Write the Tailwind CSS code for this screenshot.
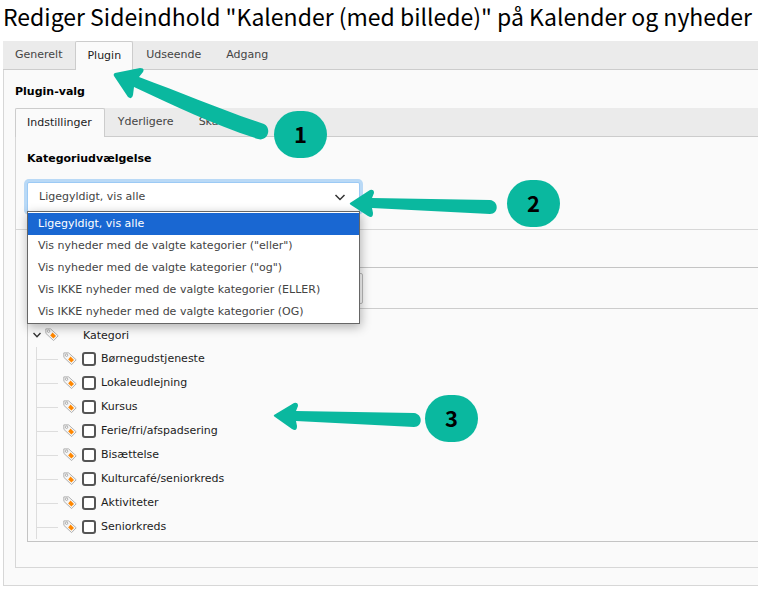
<!DOCTYPE html>
<html lang="da">
<head>
    <meta charset="UTF-8">
    <meta name="viewport" content="width=device-width, initial-scale=1.0">
    <title>Rediger Sideindhold</title>
    <script src="https://cdn.jsdelivr.net/npm/@tailwindcss/browser@4"></script>
</head>
<body class="relative bg-white font-['DejaVu_Sans',Verdana,sans-serif] text-[11px] leading-4 text-[#1c1c1c] overflow-x-hidden">
    <h1 class="h-[41px] pl-[3px] text-[23px] leading-8 text-black whitespace-nowrap font-['Noto_Sans_CJK_JP',sans-serif]">Rediger Sideindhold "Kalender (med billede)" på Kalender og nyheder</h1>

    <main class="ml-[3px]">
        <!-- Main tabs -->
        <div role="tablist" class="flex h-[29px] bg-[#ebebeb] border-b border-[#ccc] text-[#444]">
            <button role="tab" class="pl-3 pr-[13px] pb-px">Generelt</button>
            <button role="tab" aria-selected="true" class="-mb-px px-[11px] pb-px rounded-t-xs border border-b-0 border-[#ccc] bg-[#fafafa] text-[#222]">Plugin</button>
            <button role="tab" class="px-[13px] pb-px">Udseende</button>
            <button role="tab" class="px-3 pb-px">Adgang</button>
        </div>

        <div class="border-l border-b border-[#d7d7d7] bg-[#fafafa] pl-[11px] pt-3 pb-[17px]">
            <h2 class="h-[26px] pt-0.5 font-bold text-black">Plugin-valg</h2>

            <div role="tablist" class="flex h-[29px] bg-[#ebebeb] border-b border-[#ccc] text-[#444]">
                <button role="tab" aria-selected="true" class="-mb-px pl-[11px] pr-3 pb-px rounded-t-xs border border-b-0 border-[#ccc] bg-[#fafafa] text-[#222]">Indstillinger</button>
                <button role="tab" class="px-[13px] pb-px">Yderligere</button>
                <button role="tab" class="px-3 pb-px">Skabe</button>
            </div>

            <div class="border-l border-b border-[#d7d7d7] pb-[25px]">
                <section class="h-[93px] pl-[11px] pt-3.5 border-b border-[#d7d7d7]">
                    <label for="mode" class="block font-bold text-black">Kategoriudvælgelse</label>
                    <div class="relative mt-[15px] w-[333px]">
                        <select id="mode" class="block w-full h-[30px] pl-[11px] appearance-none bg-white border border-[#9ccaf5] ring-3 ring-[#b9d9f6] rounded-xs text-[#444] outline-none">
                            <option>Ligegyldigt, vis alle</option>
                        </select>
                        <svg class="absolute right-3.5 top-2.5 w-3 h-3" viewBox="0 0 12 12" fill="none" stroke="#333" stroke-width="1.5"><path d="M1.5 3 L6 7.5 L10.5 3"/></svg>
                        <ul role="listbox" class="absolute z-10 left-0 top-[29px] w-full pt-px bg-white border border-[#666] shadow-[1px_3px_10px_rgba(0,0,0,0.3)] text-[#444]">
                            <li role="option" aria-selected="true" class="h-[22px] pl-2.5 leading-[22px] bg-[#1967d2] text-white">Ligegyldigt, vis alle</li>
                            <li role="option" class="h-[22px] pl-2.5 leading-[22px]">Vis nyheder med de valgte kategorier ("eller")</li>
                            <li role="option" class="h-[22px] pl-2.5 leading-[22px]">Vis nyheder med de valgte kategorier ("og")</li>
                            <li role="option" class="h-[22px] pl-2.5 leading-[22px]">Vis IKKE nyheder med de valgte kategorier (ELLER)</li>
                            <li role="option" class="h-[22px] pl-2.5 leading-[22px]">Vis IKKE nyheder med de valgte kategorier (OG)</li>
                        </ul>
                    </div>
                </section>

                <section class="pl-[11px] pt-[37px]">
                    <div class="border border-r-0 border-[#c4c4c4]">
                        <div class="h-[41px] pt-[5px] border-b border-[#ccc]">
                            <input type="search" aria-label="Søg" class="block w-[335px] h-[31px] bg-[#fafafa] border border-[#bbb] rounded-xs">
                        </div>
                        <ul id="tree" class="pt-3.5 pb-0.5">
                            <li class="flex items-center h-6 pl-[5px]">
                                <svg class="w-2 h-2" viewBox="0 0 8 8" fill="none" stroke="#333" stroke-width="1.4"><path d="M.5 2 L4 5.8 L7.5 2"/></svg>
                                <svg class="w-3.5 h-3.5 ml-1" viewBox="0 0 14 14"><use href="#tag"/></svg>
                                <span class="ml-6 pt-px">Kategori</span>
                            </li>
                        </ul>
                    </div>
                </section>
            </div>
        </div>
    </main>

    <svg class="hidden">
        <symbol id="tag" viewBox="0 0 14 14">
            <path d="M.8 .9 L5.6 .9 L13.2 7.8 L8.6 12.6 L.9 5.4 Z" fill="#f6f6f6" stroke="#b0b0b0" stroke-width="1"/>
            <circle cx="3.6" cy="3.2" r="1.2" fill="#fff" stroke="#999" stroke-width=".8"/>
            <path d="M7.6 4.6 L11 7.9 L8.4 10.6 L5.2 7.4 Z" fill="#ff8700"/>
        </symbol>
    </svg>

    <!-- Callouts -->
    <svg class="absolute z-20 left-[112px] top-[66px] w-[158px] h-[76px]" viewBox="0 0 158 76" fill="#0ab89f"><path d="M3 7 Q1 8 2 10 L16 31 Q20 34 21 29 L22 21 C65 41 100 58 146 73 C156 76 160 62 152 58 C110 44 70 27 27 11 L31 6 Q33 2 28 2 Z"/></svg>
    <svg class="absolute z-20 left-[349px] top-[188px] w-[150px] h-[32px]" viewBox="0 0 150 32" fill="#0ab89f"><path d="M1 15 L21 2 Q25 1 25 5 L23 10 L141 12 C150 13 150 26 141 26 L23 20 L24 25 Q24 31 19 28 L2 17 Q0 16 1 15 Z"/></svg>
    <svg class="absolute z-20 left-[273px] top-[401px] w-[150px] h-[32px]" viewBox="0 0 150 32" fill="#0ab89f"><path d="M1 14 L21 2 Q25 1 25 5 L23 10 L141 12 C150 13 150 26 141 26 L23 20 L24 25 Q24 31 19 28 L2 16 Q0 15 1 14 Z"/></svg>
    <div class="absolute z-20 left-[274px] top-[111px] w-[53px] h-[47px] pb-1 rounded-3xl bg-[#0ab89f] flex items-center justify-center text-[22px] font-bold text-black font-['Noto_Sans_CJK_JP',sans-serif]">1</div>
    <div class="absolute z-20 left-[507px] top-[180px] w-[53px] h-[47px] pb-1 rounded-3xl bg-[#0ab89f] flex items-center justify-center text-[22px] font-bold text-black font-['Noto_Sans_CJK_JP',sans-serif]">2</div>
    <div class="absolute z-20 left-[425px] top-[395px] w-[53px] h-[47px] pb-1 rounded-3xl bg-[#0ab89f] flex items-center justify-center text-[22px] font-bold text-black font-['Noto_Sans_CJK_JP',sans-serif]">3</div>

    <script>
        const categories = [
            "Børnegudstjeneste",
            "Lokaleudlejning",
            "Kursus",
            "Ferie/fri/afspadsering",
            "Bisættelse",
            "Kulturcafé/seniorkreds",
            "Aktiviteter",
            "Seniorkreds"
        ];

        const tree = document.getElementById('tree');
        categories.forEach((name, i) => {
            tree.insertAdjacentHTML('beforeend', `
                <li class="flex items-center h-6 ml-2 border-l border-[#ddd]">
                    <span class="w-[21px] h-px bg-[#ddd]"></span>
                    <svg class="w-3.5 h-3.5 ml-[5px]" viewBox="0 0 14 14"><use href="#tag"/></svg>
                    <input type="checkbox" id="cat${i}" class="appearance-none w-3.5 h-3.5 ml-[5px] border-2 border-[#555] rounded-[3px] bg-white">
                    <label for="cat${i}" class="ml-[5px]">${name}</label>
                </li>`);
        });
    </script>
</body>
</html>
